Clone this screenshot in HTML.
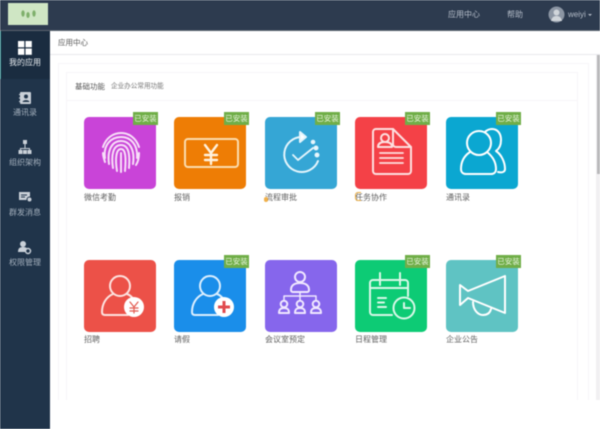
<!DOCTYPE html>
<html lang="zh">
<head>
<meta charset="utf-8">
<title>应用中心</title>
<style>
*{box-sizing:border-box;margin:0;padding:0}
html,body{width:600px;height:429px;overflow:hidden;background:#fff;font-family:"Liberation Sans","Noto Sans CJK SC",sans-serif}
#wrap{position:absolute;left:0;top:0;width:600px;height:429px;overflow:hidden;background:#fff;filter:blur(.4px)}
.abs{position:absolute}
#top{left:0;top:0;width:600px;height:31px;background:#2d3b4f;border-bottom:1px solid #5a636e}
#logo{left:8px;top:3px;width:40px;height:22px;background:#cfe6c4}
#side{left:0;top:31px;width:50px;height:398px;background:#20344a}
#act{left:0;top:31px;width:50px;height:48px;background:#1a2c40;border-left:1px solid #2a8a8a}
.nav{position:absolute;left:0;width:50px;text-align:center;font-size:8px;line-height:10px;color:#a3afbc}
.tn{position:absolute;top:10px;font-size:8px;line-height:10px;color:#b4bcc8}
#crumb{left:50px;top:31px;width:550px;height:24px;border-bottom:1px solid #e8e8ec;font-size:7.500px;line-height:24px;padding-left:8px;color:#555}
.line{background:#f7f5f8}
.card{position:absolute;width:72px;height:72px;border-radius:5px}
.card svg{position:absolute;left:0;top:0;width:72px;height:72px;fill:none;stroke:#fff;stroke-width:2;stroke-linecap:round;stroke-linejoin:round}
.bd{position:absolute;width:25px;height:13px;background:#70ae48;color:#e9f5de;font-size:7.500px;line-height:13px;text-align:center;white-space:nowrap}
.lb{position:absolute;font-size:8px;line-height:10px;color:#606060}
</style>
</head>
<body>
<div id="wrap">
<div class="abs" id="top"></div>
<div class="abs" id="logo">
<svg width="40" height="22" viewBox="0 0 40 22"><g fill="#7fb06c"><ellipse cx="15" cy="10.500" rx="1.700" ry="3.200"/><ellipse cx="20" cy="12" rx="1.700" ry="3"/><ellipse cx="26" cy="10.500" rx="1.700" ry="3.200"/></g></svg>
</div>
<div class="tn" style="left:448px">应用中心</div>
<div class="tn" style="left:507px">帮助</div>
<svg class="abs" style="left:548px;top:6px" width="17" height="17" viewBox="0 0 17 17"><circle cx="8.500" cy="8.500" r="8" fill="#8b95a3"/><circle cx="8.500" cy="6.500" r="3" fill="#d0d5da"/><path d="M3 15c1-4 3-5 5.500-5s4.500 1 5.500 5z" fill="#d0d5da"/></svg>
<div class="tn" style="left:568px">weiyi</div>
<div class="abs" style="left:588px;top:14px;border:2px solid transparent;border-top:2px solid #b4bcc8"></div>

<div class="abs" id="side"></div>
<div class="abs" id="act"></div>
<svg class="abs" style="left:18px;top:41px" width="14" height="14"><g fill="#fff"><rect width="6.300" height="6.300"/><rect x="7.500" width="6.300" height="6.300"/><rect y="7.500" width="6.300" height="6.300"/><rect x="7.500" y="7.500" width="6.300" height="6.300"/></g></svg>
<div class="nav" style="top:58px;color:#e6eaee">我的应用</div>
<svg class="abs" style="left:18px;top:91px" width="14" height="14"><rect x="2" y="1" width="11" height="12" rx="1" fill="#c9d0d8"/><circle cx="8" cy="5.500" r="2" fill="#20344a"/><path d="M4.500 11c.5-2.500 6.500-2.500 7 0z" fill="#20344a"/><path d="M1 3.500h2M1 7h2M1 10.500h2" stroke="#c9d0d8"/></svg>
<div class="nav" style="top:108px">通讯录</div>
<svg class="abs" style="left:18px;top:140px" width="14" height="14" fill="none" stroke="#c9d0d8"><path d="M7 3v5M2.500 12V8.500h9V12"/><rect x="5.500" y="0.500" width="3" height="3" fill="#c9d0d8"/><rect x="1" y="10.500" width="3" height="3" fill="#c9d0d8"/><rect x="5.500" y="10.500" width="3" height="3" fill="#c9d0d8"/><rect x="10" y="10.500" width="3" height="3" fill="#c9d0d8"/></svg>
<div class="nav" style="top:158px">组织架构</div>
<svg class="abs" style="left:18px;top:191px" width="14" height="12"><rect x="1" y="1" width="11" height="8" fill="#c9d0d8"/><path d="M3 4h6M3 6h4" stroke="#20344a"/><circle cx="11.500" cy="8.500" r="2.500" fill="#c9d0d8" stroke="#20344a"/></svg>
<div class="nav" style="top:208px">群发消息</div>
<svg class="abs" style="left:17px;top:240px" width="15" height="15"><circle cx="6" cy="4" r="3" fill="#c9d0d8"/><path d="M1 12c0-4 2-5 5-5s4 1 4 2v3z" fill="#c9d0d8"/><circle cx="11" cy="11" r="2.500" fill="#20344a" stroke="#c9d0d8" stroke-width="1.500"/></svg>
<div class="nav" style="top:258px">权限管理</div>

<div class="abs" id="crumb">应用中心</div>
<div class="abs line" style="left:58px;top:63px;width:530px;height:1px"></div>
<div class="abs line" style="left:58px;top:63px;width:1px;height:337px"></div>
<div class="abs line" style="left:588px;top:63px;width:1px;height:337px"></div>
<div class="abs line" style="left:66px;top:72px;width:511px;height:1px"></div>
<div class="abs line" style="left:66px;top:72px;width:1px;height:328px"></div>
<div class="abs line" style="left:577px;top:72px;width:1px;height:328px"></div>
<div class="abs line" style="left:66px;top:100px;width:511px;height:1px"></div>
<div class="abs" style="left:596px;top:55px;width:4px;height:345px;background:#f1f0f2"></div>
<div class="abs" style="left:597px;top:55px;width:3px;height:119px;background:#b9b9bb"></div>
<div class="abs" style="left:75px;top:82px;font-size:7.500px;line-height:10px;color:#555">基础功能</div>
<div class="abs" style="left:111px;top:82px;font-size:6.600px;line-height:10px;color:#777;white-space:nowrap">企业办公常用功能</div>

<!-- row 1 -->
<div class="card" style="left:84px;top:117px;background:#c944d8"><svg viewBox="0 0 72 72" stroke-width="1.700" style="stroke:#f8dff9">
<path d="M19 30C22 21 29 16 37 16S52 21 55 30"/>
<path d="M21 41C19 28 27 20 37 20S54 28 53 41"/>
<path d="M25 47C23 33 28 24 37 24S51 33 49 47"/>
<path d="M29 51C27 38 29 28 37 28S46 38 45 51"/>
<path d="M33 54C31 42 32 32 37 32S42 42 41 54"/>
<path d="M37 36V55"/>
<path d="M55 36C55 41 54 45 52 48"/>
<path d="M19 36C19 39 20 42 21 45"/>
</svg></div>
<div class="card" style="left:174px;top:117px;background:#ee7d05"><svg viewBox="0 0 72 72" stroke-width="2.800" style="stroke:#fbdcae">
<rect x="11" y="22" width="53" height="28" rx="3"/>
<path d="M31 28l6 8 6-8M37 36v11M31 38h12M31 43h12" style="stroke:#fff2de" stroke-width="2.400"/>
</svg></div>
<div class="card" style="left:265px;top:117px;background:#35a6d5"><svg viewBox="0 0 72 72" stroke-width="2.500" style="stroke:#e4f5fc">
<path d="M37 20A17.500 17.500 0 1 0 53 44"/>
<path d="M35 15l6 5-6 5z" fill="#fff"/>
<path d="M28 38l5 5 15-12" stroke-width="1.800"/>
<circle cx="48" cy="25" r="1.300" fill="#fff"/><circle cx="51" cy="31" r="1.500" fill="#fff"/><circle cx="52" cy="38" r="1.500" fill="#fff"/>
</svg></div>
<div class="card" style="left:355px;top:117px;background:#f44147"><svg viewBox="0 0 72 72" stroke-width="2.300" style="stroke:#fde0e0">
<path d="M21 12H38L56 30V54a3 3 0 0 1-3 3H21a3 3 0 0 1-3-3V15a3 3 0 0 1 3-3z"/>
<path d="M38 12V27a3 3 0 0 0 3 3H56"/>
<circle cx="30" cy="21" r="4"/><path d="M23 30c0-4 3-5 7-5s7 1 7 5z"/>
<path d="M25 36H48M25 41H48M25 46H48" stroke-width="1.800"/>
</svg></div>
<div class="card" style="left:446px;top:117px;background:#0ba7d1"><svg viewBox="0 0 72 72" stroke-width="2.500">
<circle cx="33" cy="26" r="12"/>
<path d="M39 15c2-2 5-3 7-3 6 0 9 5 9 11s-2 9-5 11c6 4 9 12 9 18 0 3-3 4-7 3"/>
<path d="M24 35C18 39 15 45 15 52c0 3 2 5 5 5h25c3 0 5-2 5-5 0-7-4-13-9-17"/>
</svg></div>

<!-- row 2 -->
<div class="card" style="left:84px;top:260px;background:#ec5148"><svg viewBox="0 0 72 72" stroke-width="2.500" style="stroke:#fde3e0">
<circle cx="36" cy="26" r="10"/>
<path d="M29 34c-7 3-11 10-11 18 0 2 1 3 3 3h23M43 34c3 1 5 3 7 6"/>
<circle cx="50" cy="47" r="10" fill="#fff" stroke="none"/>
<path d="M46 42l4 5 4-5M50 47v6M46 48h8M46 51h8" stroke="#e25a50" stroke-width="1.200"/>
</svg></div>
<div class="card" style="left:174px;top:260px;background:#1a8eea"><svg viewBox="0 0 72 72" stroke-width="2.500" style="stroke:#dcefff">
<circle cx="36" cy="26" r="10"/>
<path d="M29 34c-7 3-11 10-11 18 0 2 1 3 3 3h23M43 34c3 1 5 3 7 6"/>
<circle cx="50" cy="47" r="10" fill="#fff" stroke="none"/>
<path d="M50 41v12M44 47h12" stroke="#e04a4e" stroke-width="3" stroke-linecap="butt"/>
</svg></div>
<div class="card" style="left:265px;top:260px;background:#8666ec"><svg viewBox="0 0 72 72" stroke-width="1.900" style="stroke:#f0e8ff">
<circle cx="35" cy="17" r="5"/><path d="M26 30c0-5 4-7 9-7s9 2 9 7c0 1-.5 2-1.500 2h-15c-1 0-1.500-1-1.500-2z"/>
<path d="M35 32v8M19 40v-4h32v4" stroke-width="1.500"/>
<circle cx="19" cy="44" r="3.300"/><path d="M14 53c0-4 2-5 5-5s5 1 5 5z"/>
<circle cx="35" cy="44" r="3.300"/><path d="M30 53c0-4 2-5 5-5s5 1 5 5z"/>
<circle cx="51" cy="44" r="3.300"/><path d="M46 53c0-4 2-5 5-5s5 1 5 5z"/>
</svg></div>
<div class="card" style="left:355px;top:260px;background:#0dcb75"><svg viewBox="0 0 72 72" stroke-width="2.400" style="stroke:#d9f8e8">
<path d="M37 55H18a3 3 0 0 1-3-3V23a3 3 0 0 1 3-3h32a3 3 0 0 1 3 3v13"/>
<path d="M15 28H53M25 13V25M45 13V25"/>
<path d="M23 38h8M23 42.500h6M23 47h8" stroke-width="2"/>
<circle cx="49" cy="48" r="10.500"/><path d="M49 43v5h6"/>
</svg></div>
<div class="card" style="left:446px;top:260px;background:#5fc3c3"><svg viewBox="0 0 72 72" stroke-width="2.800">
<path d="M14 25l8 6 37-15v37L22 38l-8 7z"/>
<path d="M27 42c0 8 5 13 10 13 4 0 7-2 8-6"/>
</svg></div>

<div class="bd" style="left:133px;top:112px">已安装</div>
<div class="bd" style="left:224px;top:112px">已安装</div>
<div class="bd" style="left:315px;top:112px">已安装</div>
<div class="bd" style="left:405px;top:112px">已安装</div>
<div class="bd" style="left:496px;top:112px">已安装</div>
<div class="bd" style="left:224px;top:255px">已安装</div>
<div class="bd" style="left:405px;top:255px">已安装</div>
<div class="bd" style="left:496px;top:255px">已安装</div>

<div class="lb" style="left:84px;top:193px">微信考勤</div>
<div class="lb" style="left:174px;top:193px">报销</div>
<div class="lb" style="left:265px;top:193px">流程审批</div>
<div class="lb" style="left:355px;top:193px">任务协作</div>
<div class="lb" style="left:446px;top:193px">通讯录</div>
<div class="lb" style="left:84px;top:335px">招聘</div>
<div class="lb" style="left:174px;top:335px">请假</div>
<div class="lb" style="left:265px;top:335px">会议室预定</div>
<div class="lb" style="left:355px;top:335px">日程管理</div>
<div class="lb" style="left:446px;top:335px">企业公告</div>
<div class="abs" style="left:264px;top:197px;width:4px;height:5px;background:#f0b04a;border-radius:2px"></div>
<div class="abs" style="left:355px;top:192px;width:6px;height:9px;border:1px solid #e8a93c;border-right:0;border-radius:3px 0 0 3px"></div>
</div>
</body>
</html>
